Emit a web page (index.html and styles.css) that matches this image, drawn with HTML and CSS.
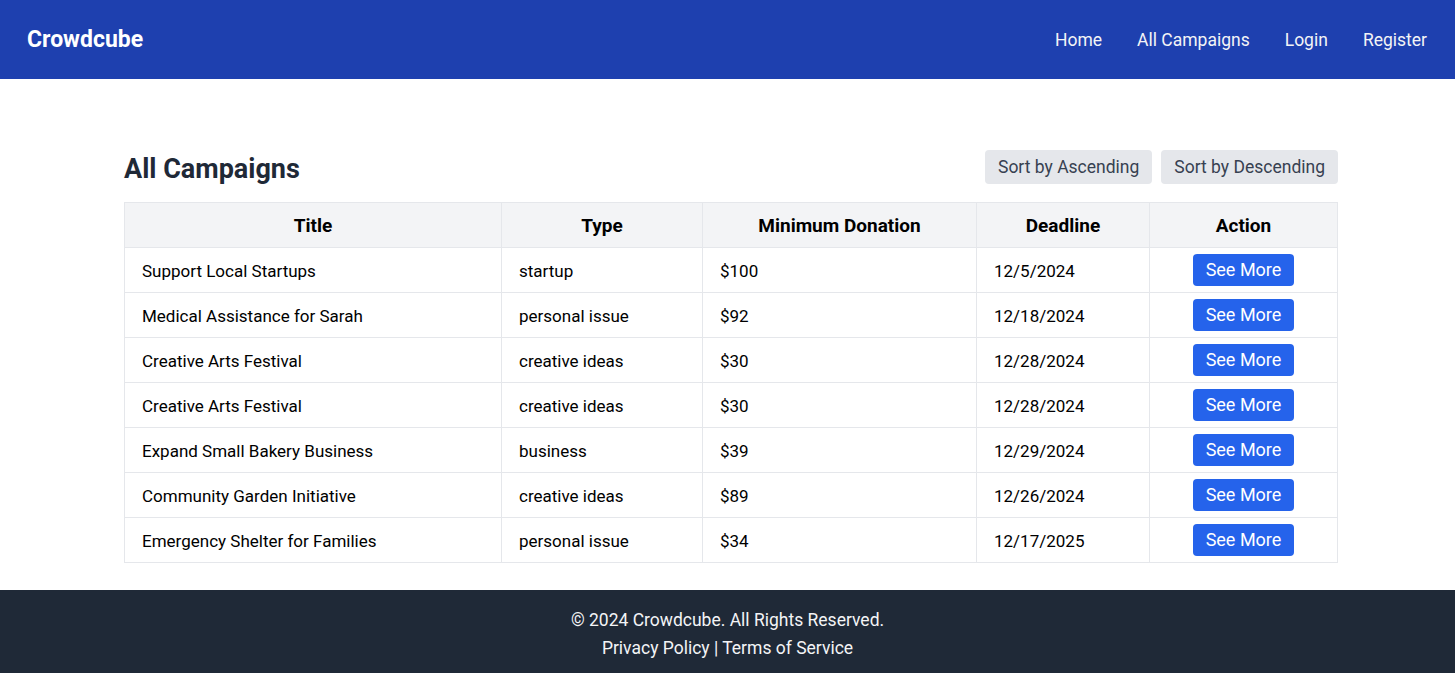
FILE: index.html
```html
<!DOCTYPE html>
<html lang="en">
<head>
<meta charset="utf-8">
<title>Crowdcube - All Campaigns</title>
<link rel="stylesheet" href="styles.css">
</head>
<body>
<nav class="navbar">
  <a class="logo" href="#">Crowdcube</a>
  <ul class="nav-links">
    <li><a href="#">Home</a></li>
    <li><a href="#">All Campaigns</a></li>
    <li><a href="#">Login</a></li>
    <li><a href="#">Register</a></li>
  </ul>
</nav>
<main class="content">
  <div class="head-row">
    <h1 class="title">All Campaigns</h1>
    <div class="sort-buttons">
      <button class="sort-btn">Sort by Ascending</button>
      <button class="sort-btn">Sort by Descending</button>
    </div>
  </div>
  <table class="campaigns">
    <colgroup>
      <col class="c-title"><col class="c-type"><col class="c-min"><col class="c-dead"><col class="c-act">
    </colgroup>
    <thead>
      <tr><th>Title</th><th>Type</th><th>Minimum Donation</th><th>Deadline</th><th>Action</th></tr>
    </thead>
    <tbody>
      <tr><td>Support Local Startups</td><td>startup</td><td>$100</td><td>12/5/2024</td><td class="act"><button class="more-btn">See More</button></td></tr>
      <tr><td>Medical Assistance for Sarah</td><td>personal issue</td><td>$92</td><td>12/18/2024</td><td class="act"><button class="more-btn">See More</button></td></tr>
      <tr><td>Creative Arts Festival</td><td>creative ideas</td><td>$30</td><td>12/28/2024</td><td class="act"><button class="more-btn">See More</button></td></tr>
      <tr><td>Creative Arts Festival</td><td>creative ideas</td><td>$30</td><td>12/28/2024</td><td class="act"><button class="more-btn">See More</button></td></tr>
      <tr><td>Expand Small Bakery Business</td><td>business</td><td>$39</td><td>12/29/2024</td><td class="act"><button class="more-btn">See More</button></td></tr>
      <tr><td>Community Garden Initiative</td><td>creative ideas</td><td>$89</td><td>12/26/2024</td><td class="act"><button class="more-btn">See More</button></td></tr>
      <tr><td>Emergency Shelter for Families</td><td>personal issue</td><td>$34</td><td>12/17/2025</td><td class="act"><button class="more-btn">See More</button></td></tr>
    </tbody>
  </table>
</main>
<footer class="footer">
  <p>© 2024 Crowdcube. All Rights Reserved.</p>
  <p>Privacy Policy | Terms of Service</p>
</footer>
</body>
</html>
```
FILE: styles.css
```css
* { box-sizing: border-box; }
html, body { margin: 0; padding: 0; }
body {
  font-family: Roboto, "Open Sans", "Liberation Sans", sans-serif;
  font-size: 18px;
  line-height: 28px;
  color: #000;
  background: #fff;
}
a { text-decoration: none; color: inherit; }

.navbar {
  height: 79px;
  background: #1e40af;
  display: flex;
  align-items: center;
  justify-content: space-between;
  padding: 0 28px 0 27px;
}
.logo {
  color: #fff;
  font-weight: 700;
  font-size: 23px;
}
.nav-links {
  list-style: none;
  margin: 0;
  padding: 0;
  display: flex;
  gap: 35px;
}
.nav-links a {
  color: #f3f4f6;
  font-size: 17.5px;
}

.content {
  margin: 0 117px 0 124px;
  padding-top: 71px;
  padding-bottom: 27px;
}
.head-row {
  display: flex;
  justify-content: space-between;
  align-items: flex-start;
  margin-bottom: 18px;
}
.title {
  margin: 4px 0 0;
  font-size: 27px;
  line-height: 30px;
  font-weight: 700;
  color: #1f2937;
}
.sort-buttons { display: flex; gap: 9px; }
.sort-btn {
  font: inherit;
  font-size: 17.5px;
  line-height: 28px;
  height: 34px;
  padding: 0 13px;
  border: none;
  border-radius: 4px;
  background: #e5e7eb;
  color: #374151;
}

.campaigns {
  width: 100%;
  border-collapse: collapse;
  table-layout: fixed;
  border: 1px solid #e5e7eb;
}
.c-title { width: 377px; }
.c-type { width: 201px; }
.c-min { width: 274px; }
.c-dead { width: 173px; }
.c-act { width: auto; }
.campaigns th, .campaigns td {
  border: 1px solid #e5e7eb;
  padding: 8px 17px;
  font-size: 17px;
  text-align: left;
  white-space: nowrap;
}
.campaigns td { padding-top: 9px; padding-bottom: 7px; }
.campaigns th {
  background: #f3f4f6;
  font-weight: 700;
  font-size: 19px;
  text-align: center;
  padding-top: 9px;
  padding-bottom: 7px;
}
.campaigns td.act { text-align: center; padding-top: 6px; padding-bottom: 6px; }
.more-btn {
  font: inherit;
  font-size: 18px;
  line-height: 28px;
  height: 32px;
  width: 101px;
  padding: 0;
  border: none;
  border-radius: 4px;
  background: #2563eb;
  color: #fff;
  vertical-align: top;
}

.footer {
  background: #1f2937;
  color: #f3f4f6;
  text-align: center;
  padding: 16px 0;
}
.footer p { margin: 0; font-size: 17.5px; }
```
